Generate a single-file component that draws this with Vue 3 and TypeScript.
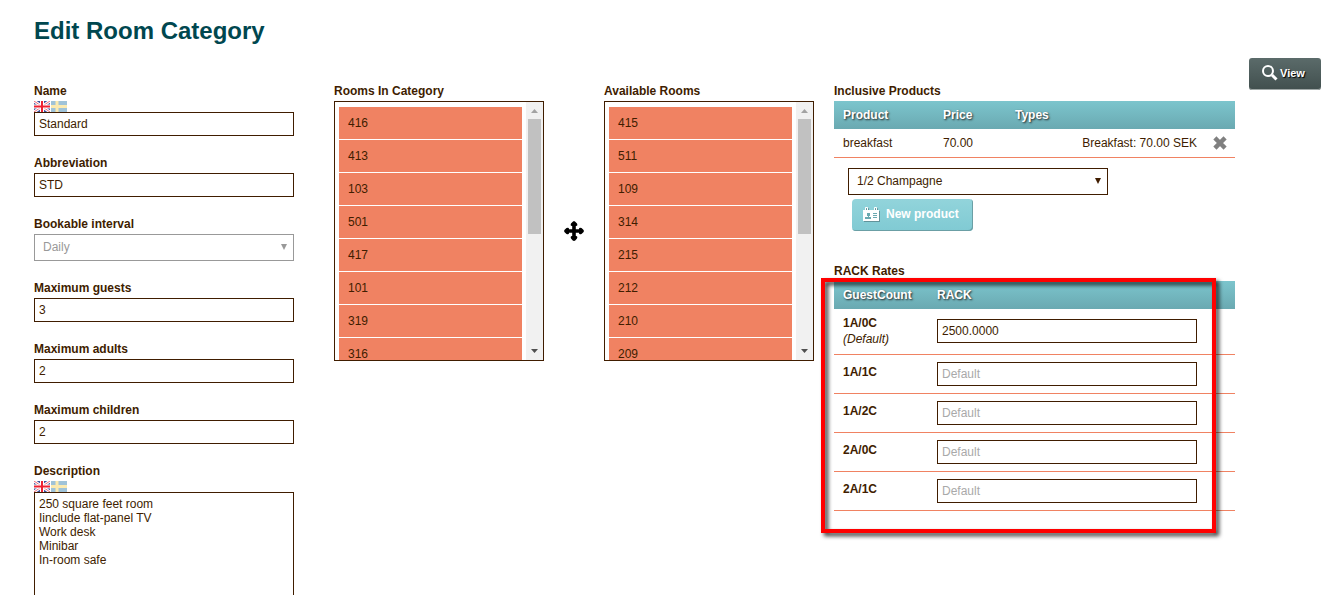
<script setup lang="ts">
import { ref } from 'vue'

interface Rate {
  guests: string
  value: string
  isDefault?: boolean
}

const name = ref('Standard')
const abbreviation = ref('STD')
const interval = ref('Daily')
const limits = ref([
  { id: 'guests', label: 'Maximum guests', value: '3' },
  { id: 'adults', label: 'Maximum adults', value: '2' },
  { id: 'children', label: 'Maximum children', value: '2' },
])
const description = ref(
  ['250 square feet room', 'Iinclude flat-panel TV', 'Work desk', 'Minibar', 'In-room safe'].join('\n'),
)
const categoryRooms = ['416', '413', '103', '501', '417', '101', '319', '316']
const availableRooms = ['415', '511', '109', '314', '215', '212', '210', '209']
const lists = [
  { key: 'category', title: 'Rooms In Category', rooms: categoryRooms },
  { key: 'available', title: 'Available Rooms', rooms: availableRooms },
]
const product = ref('1/2 Champagne')
const rates = ref<Rate[]>([
  { guests: '1A/0C', value: '2500.0000', isDefault: true },
  { guests: '1A/1C', value: '' },
  { guests: '1A/2C', value: '' },
  { guests: '2A/0C', value: '' },
  { guests: '2A/1C', value: '' },
])
</script>

<template>
  <div class="page">
    <h1>Edit Room Category</h1>
    <div class="body">
      <main class="columns">
        <form class="details" @submit.prevent>
          <div class="field">
            <label for="name">Name</label>
            <div class="flags">
              <svg class="flag" viewBox="0 0 16 11" role="img" aria-label="English">
                <rect width="16" height="11" fill="#3c4f9c" />
                <path d="M0 0L16 11M16 0L0 11" stroke="#fff" stroke-width="3" />
                <path d="M0 0L16 11M16 0L0 11" stroke="#ec6a78" stroke-width="1" />
                <path d="M8 0V11M0 5.500H16" stroke="#fff" stroke-width="4" />
                <path d="M8 0V11M0 5.500H16" stroke="#ee2233" stroke-width="2" />
              </svg>
              <svg class="flag" viewBox="0 0 16 11" role="img" aria-label="Svenska">
                <rect width="16" height="11" fill="#9fc3d8" />
                <path d="M6 0V11M0 5.500H16" stroke="#fbeab0" stroke-width="3" />
              </svg>
            </div>
            <input id="name" v-model="name" type="text" />
          </div>
          <div class="field">
            <label for="abbreviation">Abbreviation</label>
            <input id="abbreviation" v-model="abbreviation" type="text" />
          </div>
          <div class="field">
            <label for="interval">Bookable interval</label>
            <div class="select disabled">
              <select id="interval" v-model="interval" disabled>
                <option>Daily</option>
              </select>
              <svg class="caret" viewBox="0 0 6 6" aria-hidden="true"><path d="M0 0H6L3 6Z" /></svg>
            </div>
          </div>
          <div v-for="limit in limits" :key="limit.id" class="field">
            <label :for="limit.id">{{ limit.label }}</label>
            <input :id="limit.id" v-model="limit.value" type="text" />
          </div>
          <div class="field">
            <label for="description">Description</label>
            <div class="flags">
              <svg class="flag" viewBox="0 0 16 11" role="img" aria-label="English">
                <rect width="16" height="11" fill="#3c4f9c" />
                <path d="M0 0L16 11M16 0L0 11" stroke="#fff" stroke-width="3" />
                <path d="M0 0L16 11M16 0L0 11" stroke="#ec6a78" stroke-width="1" />
                <path d="M8 0V11M0 5.500H16" stroke="#fff" stroke-width="4" />
                <path d="M8 0V11M0 5.500H16" stroke="#ee2233" stroke-width="2" />
              </svg>
              <svg class="flag" viewBox="0 0 16 11" role="img" aria-label="Svenska">
                <rect width="16" height="11" fill="#9fc3d8" />
                <path d="M6 0V11M0 5.500H16" stroke="#fbeab0" stroke-width="3" />
              </svg>
            </div>
            <textarea id="description" v-model="description" rows="10"></textarea>
          </div>
        </form>

        <div class="rooms">
          <template v-for="(list, i) in lists" :key="list.key">
            <div v-if="i === 1" class="move">
              <svg viewBox="0 0 20 20" aria-hidden="true">
                <path
                  d="M10 0Q11 0 13 2.500Q14 5 12 5H11.800V8.200H15V8Q15 6 17.500 7Q20 9 20 10Q20 11 17.500 13Q15 14 15 12V11.800H11.800V15H12Q14 15 13 17.500Q11 20 10 20Q9 20 7 17.500Q6 15 8 15H8.200V11.800H5V12Q5 14 2.500 13Q0 11 0 10Q0 9 2.500 7Q5 6 5 8V8.200H8.200V5H8Q6 5 7 2.500Q9 0 10 0Z"
                />
              </svg>
            </div>
            <section class="room-list">
              <h2>{{ list.title }}</h2>
              <div class="list-box">
                <ul>
                  <li v-for="room in list.rooms" :key="room">{{ room }}</li>
                </ul>
                <div class="track" aria-hidden="true">
                  <svg class="arrow up" viewBox="0 0 17 17"><path d="M5 11H12L8.500 7Z" /></svg>
                  <div class="thumb"></div>
                  <svg class="arrow down" viewBox="0 0 17 17"><path d="M5 6H12L8.500 10Z" /></svg>
                </div>
              </div>
            </section>
          </template>
        </div>

        <div class="pricing">
          <section>
            <h2>Inclusive Products</h2>
            <table>
              <colgroup>
                <col class="c-product" />
                <col class="c-price" />
                <col />
                <col class="c-end" />
              </colgroup>
              <thead>
                <tr><th>Product</th><th>Price</th><th>Types</th><th></th></tr>
              </thead>
              <tbody>
                <tr class="product">
                  <td>breakfast</td>
                  <td>70.00</td>
                  <td class="right">Breakfast: 70.00 SEK</td>
                  <td class="remove-cell">
                    <button class="remove" type="button" aria-label="Remove breakfast">
                      <svg viewBox="0 0 14 14" aria-hidden="true">
                        <path d="M3.500 3.500L10.500 10.500M10.500 3.500L3.500 10.500" fill="none" stroke="#808080" stroke-width="4.500" stroke-linecap="square" />
                      </svg>
                    </button>
                  </td>
                </tr>
              </tbody>
            </table>
            <div class="add-product">
              <div class="select">
                <select v-model="product" aria-label="Product">
                  <option>1/2 Champagne</option>
                </select>
                <svg class="caret" viewBox="0 0 6 6" aria-hidden="true"><path d="M0 0H6L3 6Z" /></svg>
              </div>
              <button class="new-product" type="button">
                <svg viewBox="0 0 16 16" aria-hidden="true">
                  <path fill="#fff" d="M0 4H16V15H0Z" />
                  <path fill="none" stroke="#fff" d="M2.500 4V1.500H4.500V4M11.500 4V1.500H13.500V4" />
                  <path fill="#6ba9b0" d="M4 7H7V10H6V11H8V13H2V11H5V10H4ZM10 7H14V8H10ZM10 9H14V10H10ZM10 11H14V12H10Z" />
                </svg>
                <span>New product</span>
              </button>
            </div>
          </section>

          <section class="rates">
            <h2>RACK Rates</h2>
            <div class="rate-area">
              <table>
                <colgroup>
                  <col class="c-guests" />
                  <col />
                  <col class="c-end" />
                </colgroup>
                <thead>
                  <tr><th>GuestCount</th><th>RACK</th><th></th></tr>
                </thead>
                <tbody>
                  <tr v-for="rate in rates" :key="rate.guests" class="rate" :class="{ tall: rate.isDefault }">
                    <td>
                      <label :for="'rate-' + rate.guests">{{ rate.guests }}</label>
                      <em v-if="rate.isDefault">(Default)</em>
                    </td>
                    <td class="amount">
                      <input :id="'rate-' + rate.guests" v-model="rate.value" type="text" placeholder="Default" />
                    </td>
                    <td></td>
                  </tr>
                </tbody>
              </table>
              <div class="highlight" aria-hidden="true"></div>
            </div>
          </section>
        </div>
      </main>
      <button class="view" type="button">
        <svg viewBox="0 0 16 16" aria-hidden="true">
          <circle cx="6" cy="6" r="5" fill="none" stroke="#fff" stroke-width="2" />
          <path d="M10 10L14.500 14.500" stroke="#fff" stroke-width="3" />
        </svg>
        <span>View</span>
      </button>
    </div>
  </div>
</template>

<style>
body {
  margin: 0;
  overflow-x: hidden;
  background: #fff;
}
</style>

<style scoped>
.page {
  padding: 16px 22px 0 34px;
  color: #401d00;
  font: 12px/16px "Liberation Sans", Arial, sans-serif;
}

.page * {
  box-sizing: border-box;
}

h1 {
  margin: 0;
  color: #00474f;
  font-size: 24px;
  line-height: 30px;
}

h2,
.field label {
  display: block;
  margin: 0 0 2px;
  font-size: 12px;
  line-height: 16px;
  font-weight: bold;
}

.body {
  display: flex;
  align-items: flex-start;
  gap: 14px;
  margin-top: 12px;
}

.columns {
  flex: 1;
  display: grid;
  grid-template-columns: minmax(0, 260fr) 40px minmax(0, 480fr) 20px minmax(0, 401fr);
  padding-top: 25px;
}

.details {
  grid-column: 1;
}

.rooms {
  grid-column: 3;
  display: flex;
  align-items: flex-start;
}

.pricing {
  grid-column: 5;
}

.field {
  margin-bottom: 19px;
}

input,
textarea,
select {
  display: block;
  width: 100%;
  margin: 0;
  border: 1px solid #401d00;
  border-radius: 0;
  background: #fff;
  color: #401d00;
  font: inherit;
  outline: none;
}

input {
  height: 24px;
  padding: 0 4px;
}

input::placeholder {
  color: #a9a9a9;
  opacity: 1;
}

textarea {
  padding: 4px;
  line-height: 14px;
  resize: none;
}

select {
  height: 27px;
  padding: 0 8px 2px;
  appearance: none;
  opacity: 1;
}

.select {
  position: relative;
}

.caret {
  position: absolute;
  top: 10px;
  right: 7px;
  width: 6px;
  height: 6px;
  fill: #401d00;
  pointer-events: none;
}

.disabled select {
  border-color: #999;
  color: #999;
}

.disabled .caret {
  fill: #999;
}

.flags {
  display: flex;
  gap: 1px;
}

.flag {
  width: 16px;
  height: 11px;
}

.room-list {
  flex: 1;
}

.move {
  display: flex;
  justify-content: center;
  width: 60px;
  padding-top: 138px;
}

.move svg {
  width: 20px;
  height: 20px;
}

.list-box {
  display: flex;
  height: 260px;
  border: 1px solid #401d00;
  overflow: hidden;
}

.list-box ul {
  flex: 1;
  margin: 0;
  padding: 5px 4px 0;
  list-style: none;
}

.list-box li {
  height: 33px;
  padding: 0 9px;
  border-bottom: 1px solid #fff;
  background: #f08262;
  line-height: 32px;
}

.track {
  display: flex;
  flex-direction: column;
  width: 17px;
  background: #f1f1f1;
}

.arrow {
  width: 17px;
  height: 17px;
}

.up {
  fill: #a3a3a3;
}

.down {
  margin-top: auto;
  fill: #505050;
}

.thumb {
  height: 115px;
  margin: 0 2px;
  background: #c1c1c1;
}

table {
  width: 100%;
  border-collapse: separate;
  border-spacing: 0;
  table-layout: fixed;
}

.c-product {
  width: 100px;
}

.c-price {
  width: 72px;
}

.c-guests {
  width: 94px;
}

.c-end {
  width: 29px;
}

thead {
  background: linear-gradient(#7cc5cd, #6aa9b1);
}

th {
  height: 28px;
  padding: 0 9px;
  color: #fff;
  text-align: left;
  text-shadow: 1px 1px 2px #222;
}

td {
  padding: 0 9px;
  border-bottom: 1px solid #f08262;
}

.product td {
  height: 29px;
}

td.right {
  text-align: right;
}

.product .remove-cell {
  padding: 0 7px;
}

.remove {
  display: block;
  width: 14px;
  height: 14px;
  padding: 0;
  border: 0;
  background: none;
}

.remove svg {
  display: block;
}

.add-product {
  padding: 10px 0 0 14px;
}

.add-product .select {
  width: 260px;
}

.new-product {
  display: flex;
  align-items: center;
  gap: 7px;
  height: 32px;
  margin: 4px 0 0 4px;
  padding: 0 14px 2px 11px;
  border: 0;
  border-radius: 4px;
  background: linear-gradient(#92d4db, #80cad3);
  box-shadow: inset -1px -1px 0 #6b9fa5;
  color: #fff;
  font: bold 12px/16px "Liberation Sans", Arial, sans-serif;
}

.new-product svg {
  width: 16px;
  height: 16px;
  filter: drop-shadow(1px 1px 0 #61939a);
}

.rates {
  margin-top: 32px;
}

.rate-area {
  position: relative;
}

.rate td {
  height: 39px;
  padding-top: 9px;
  vertical-align: top;
}

.rate td.amount {
  padding-top: 7px;
}

.tall td {
  height: 46px;
  padding-top: 6px;
}

.tall td.amount {
  padding-top: 10px;
}

.rate label {
  display: block;
  font-weight: bold;
}

/* Call-out frame around the rate table */
.highlight {
  position: absolute;
  top: -3px;
  right: 19px;
  bottom: -22px;
  left: -13px;
  border: 4px solid #f00;
  filter: drop-shadow(3px 3px 2px #000c);
  pointer-events: none;
}

.view {
  display: flex;
  align-items: center;
  gap: 2px;
  width: 72px;
  height: 32px;
  padding: 0 0 2px 13px;
  border: 0;
  border-radius: 3px;
  background: linear-gradient(#5b6b6a, #414f4e);
  box-shadow: inset 0 -1px 0 #a0a8a7;
  color: #fff;
  font: bold 11px/16px "Liberation Sans", Arial, sans-serif;
  text-shadow: 1px 1px 1px #000;
}

.view svg {
  width: 16px;
  height: 16px;
}
</style>
